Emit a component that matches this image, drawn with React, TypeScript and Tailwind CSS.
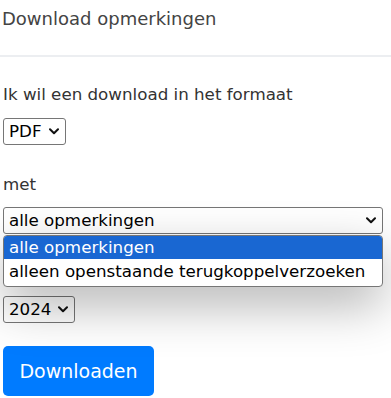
import React from 'react';

const Chevron: React.FC<{ className?: string }> = ({ className = '' }) => (
  <svg className={className} width="10" height="7" viewBox="0 0 10 7" fill="none">
    <path d="M1 1.2L5 5.2L9 1.2" stroke="#111" strokeWidth="2" strokeLinecap="round" strokeLinejoin="round" />
  </svg>
);

interface FakeSelectProps {
  value: string;
  widthClass: string;
}

const FakeSelect: React.FC<FakeSelectProps> = ({ value, widthClass }) => (
  <div
    className={`${widthClass} h-[27px] flex items-center justify-between border border-[#767676] rounded-[3px] bg-white pl-[5px] pr-[6px] text-[16.7px] text-black leading-none`}
  >
    <span>{value}</span>
    <Chevron />
  </div>
);

const App: React.FC = () => {
  const options = ['alle opmerkingen', 'alleen openstaande terugkoppelverzoeken'];

  return (
    <div className="w-[391px] h-[398px] overflow-hidden bg-white font-['DejaVu_Sans',sans-serif] text-[#333]">
      {/* Header */}
      <div className="pt-[7px] pb-[24px] pl-[2px] border-b-2 border-[#eceef1]">
        <h2 className="text-[18px] leading-[24px] text-[#444] font-normal">Download opmerkingen</h2>
      </div>

      {/* Form */}
      <div className="px-[3px] pt-[25px]">
        <p className="text-[16.7px] leading-[24px] mb-[12px]">Ik wil een download in het formaat</p>
        <FakeSelect value="PDF" widthClass="w-[63px]" />

        <p className="text-[16.7px] leading-[24px] mt-[27px] mb-[11px]">met</p>
        <div className="relative z-10">
          <FakeSelect value="alle opmerkingen" widthClass="w-[380px]" />
          {/* open option list */}
          <div className="absolute left-0 top-full mt-px w-[380px] pb-[2px] bg-white border border-[#767676] rounded-[4px] overflow-hidden shadow-[0_18px_50px_rgba(0,0,0,0.3)]">
            {options.map((opt, i) => (
              <div
                key={opt}
                className={`flex items-center pl-[5px] text-[16.7px] leading-none ${
                  i === 0 ? 'h-[23px] bg-[#1967d2] text-white' : 'h-[25px] text-black'
                }`}
              >
                {opt}
              </div>
            ))}
          </div>
        </div>

        {/* label under the open list */}
        <div className="h-[24px] mt-[27px] mb-[11px]" />
        <FakeSelect value="2024" widthClass="w-[72px]" />

        <button className="mt-[23px] w-[151px] h-[50px] rounded-[5px] bg-[#007bff] text-white text-[19px] leading-none">
          Downloaden
        </button>
      </div>
    </div>
  );
};

export default App;
